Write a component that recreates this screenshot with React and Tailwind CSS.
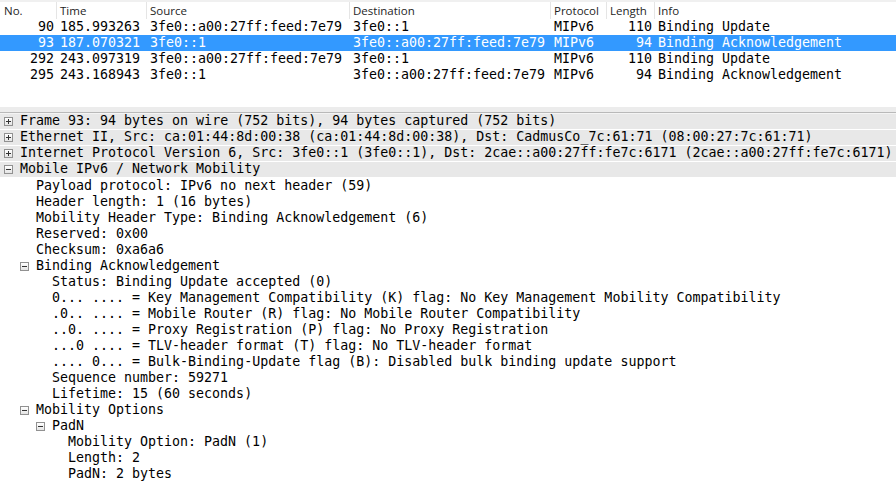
const mono = { fontFamily: '"DejaVu Sans Mono", "Liberation Mono", monospace' }

const packets = [
    { no: "90", time: "185.993263", src: "3fe0::a00:27ff:feed:7e79", dst: "3fe0::1", proto: "MIPv6", len: "110", info: "Binding Update" },
    { no: "93", time: "187.070321", src: "3fe0::1", dst: "3fe0::a00:27ff:feed:7e79", proto: "MIPv6", len: "94", info: "Binding Acknowledgement", selected: true },
    { no: "292", time: "243.097319", src: "3fe0::a00:27ff:feed:7e79", dst: "3fe0::1", proto: "MIPv6", len: "110", info: "Binding Update" },
    { no: "295", time: "243.168943", src: "3fe0::1", dst: "3fe0::a00:27ff:feed:7e79", proto: "MIPv6", len: "94", info: "Binding Acknowledgement" },
]

function ExpandBox({ open }) {
    return (
        <span className="relative inline-block h-[9px] w-[9px] shrink-0 border border-[#919191] bg-gradient-to-b from-white to-[#e4e4e4]">
            <span className="absolute left-[1px] top-[3px] h-[1px] w-[5px] bg-[#333]" />
            {!open && <span className="absolute left-[3px] top-[1px] h-[5px] w-[1px] bg-[#333]" />}
        </span>
    )
}

function HeaderCell({ w, children }) {
    return (
        <div className={`${w} h-full shrink-0 border-r border-[#e5e5e5] pl-[3px] flex items-center`}>
            {children}
        </div>
    )
}

function DetailRow({ depth = 0, box, top, children }) {
    const pad = ["pl-[4px]", "pl-[20px]", "pl-[36px]", "pl-[52px]"][depth]
    return (
        <div className={`h-4 flex items-center overflow-hidden whitespace-pre ${pad} ${top ? "bg-[#e8e8e8] border-b border-white" : ""}`}>
            <span className="w-4 shrink-0 flex items-center">{box !== undefined && <ExpandBox open={box} />}</span>
            <span className={`leading-4 relative ${top ? "-top-[1px]" : ""}`}>{children}</span>
        </div>
    )
}

export default function App() {
    return (
        <div className="w-[896px] h-[490px] overflow-hidden bg-white text-black">
            {/* packet list */}
            <div className="h-[107px] bg-white">
                <div className="h-[2px] bg-[#f0f0f0]" />
                <div className="h-[17px] flex text-[11.5px] text-[#1e1e1e]" style={{ fontFamily: '"Open Sans", "Noto Sans", sans-serif' }}>
                    <div className="w-[57px] h-full shrink-0 border-r border-[#e5e5e5] pl-[4px] flex items-center">No.</div>
                    <HeaderCell w="w-[90px]">Time</HeaderCell>
                    <HeaderCell w="w-[203px]">Source</HeaderCell>
                    <HeaderCell w="w-[201px]">Destination</HeaderCell>
                    <HeaderCell w="w-[56px]">Protocol</HeaderCell>
                    <HeaderCell w="w-[48px]">Length</HeaderCell>
                    <div className="flex-1 pl-[3px] flex items-center">Info</div>
                </div>
                <div className="text-[13.3px]" style={mono}>
                    {packets.map((p) => (
                        <div key={p.no} className={`h-4 flex items-center whitespace-pre leading-4 ${p.selected ? "bg-[#3399ff] text-white" : ""}`}>
                            <div className="w-[57px] shrink-0 pr-[3px] text-right">{p.no}</div>
                            <div className="w-[90px] shrink-0 pl-[3px]">{p.time}</div>
                            <div className="w-[203px] shrink-0 pl-[3px]">{p.src}</div>
                            <div className="w-[201px] shrink-0 pl-[3px]">{p.dst}</div>
                            <div className="w-[56px] shrink-0 pl-[3px]">{p.proto}</div>
                            <div className="w-[48px] shrink-0 pr-[3px] text-right">{p.len}</div>
                            <div className="flex-1 pl-[3px]">{p.info}</div>
                        </div>
                    ))}
                </div>
            </div>

            {/* splitter */}
            <div className="h-[5px] bg-[#ececec]" />
            <div className="h-[1px] bg-[#b9b9b9]" />
            <div className="h-[1px] bg-[#f4f4f4]" />

            {/* packet details */}
            <div className="text-[13.3px]" style={mono}>
                <DetailRow top box={false}>Frame 93: 94 bytes on wire (752 bits), 94 bytes captured (752 bits)</DetailRow>
                <DetailRow top box={false}>Ethernet II, Src: ca:01:44:8d:00:38 (ca:01:44:8d:00:38), Dst: CadmusCo_7c:61:71 (08:00:27:7c:61:71)</DetailRow>
                <DetailRow top box={false}>Internet Protocol Version 6, Src: 3fe0::1 (3fe0::1), Dst: 2cae::a00:27ff:fe7c:6171 (2cae::a00:27ff:fe7c:6171)</DetailRow>
                <DetailRow top box={true}>Mobile IPv6 / Network Mobility</DetailRow>
                <DetailRow depth={1}>Payload protocol: IPv6 no next header (59)</DetailRow>
                <DetailRow depth={1}>Header length: 1 (16 bytes)</DetailRow>
                <DetailRow depth={1}>Mobility Header Type: Binding Acknowledgement (6)</DetailRow>
                <DetailRow depth={1}>Reserved: 0x00</DetailRow>
                <DetailRow depth={1}>Checksum: 0xa6a6</DetailRow>
                <DetailRow depth={1} box={true}>Binding Acknowledgement</DetailRow>
                <DetailRow depth={2}>Status: Binding Update accepted (0)</DetailRow>
                <DetailRow depth={2}>0... .... = Key Management Compatibility (K) flag: No Key Management Mobility Compatibility</DetailRow>
                <DetailRow depth={2}>.0.. .... = Mobile Router (R) flag: No Mobile Router Compatibility</DetailRow>
                <DetailRow depth={2}>..0. .... = Proxy Registration (P) flag: No Proxy Registration</DetailRow>
                <DetailRow depth={2}>...0 .... = TLV-header format (T) flag: No TLV-header format</DetailRow>
                <DetailRow depth={2}>.... 0... = Bulk-Binding-Update flag (B): Disabled bulk binding update support</DetailRow>
                <DetailRow depth={2}>Sequence number: 59271</DetailRow>
                <DetailRow depth={2}>Lifetime: 15 (60 seconds)</DetailRow>
                <DetailRow depth={1} box={true}>Mobility Options</DetailRow>
                <DetailRow depth={2} box={true}>PadN</DetailRow>
                <DetailRow depth={3}>Mobility Option: PadN (1)</DetailRow>
                <DetailRow depth={3}>Length: 2</DetailRow>
                <DetailRow depth={3}>PadN: 2 bytes</DetailRow>
            </div>
        </div>
    )
}
